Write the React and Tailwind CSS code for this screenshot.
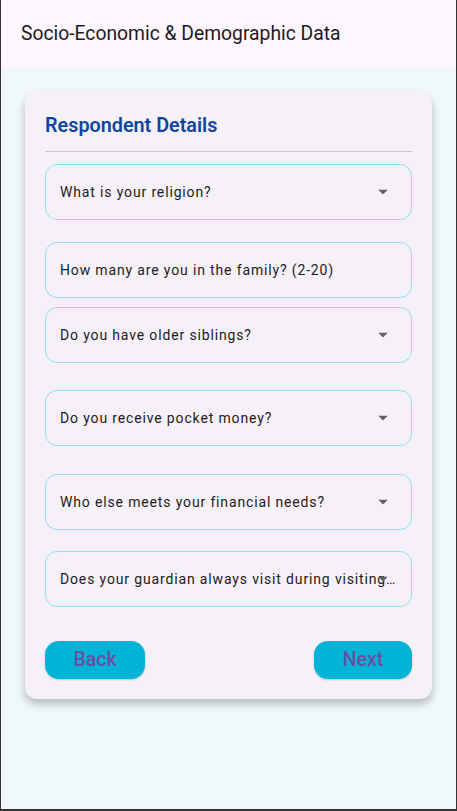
import { useState } from 'react'

const fields = [
  { label: 'What is your religion?', dropdown: true, mt: 'mt-[12px]' },
  { label: 'How many are you in the family? (2-20)', dropdown: false, mt: 'mt-[22px]' },
  { label: 'Do you have older siblings?', dropdown: true, mt: 'mt-[9px]' },
  { label: 'Do you receive pocket money?', dropdown: true, mt: 'mt-[27px]' },
  { label: 'Who else meets your financial needs?', dropdown: true, mt: 'mt-[28px]' },
  { label: 'Does your guardian always visit during visiting days?', dropdown: true, mt: 'mt-[21px]' },
]

function Arrow() {
  return (
    <svg width="10" height="5" viewBox="0 0 10 5" className="absolute right-[23px] top-1/2 -translate-y-1/2">
      <path d="M0 0 L10 0 L5 5 Z" fill="#616161" />
    </svg>
  )
}

function Field({ label, dropdown, mt }) {
  return (
    <div
      className={`${mt} relative h-[56px] rounded-[12px] border border-[#8fdff0] flex items-center pl-[14px] pr-[12px]`}
    >
      <span className="truncate text-[14px] tracking-[0.85px] text-[#1d1b20]">{label}</span>
      {dropdown && <Arrow />}
    </div>
  )
}

export default function App() {
  const [page] = useState(1)

  return (
    <div
      className="h-[811px] bg-[#f0f8fa] border-l border-r border-b-2 border-[#333333] flex flex-col"
      style={{ fontFamily: 'Roboto, "Liberation Sans", sans-serif' }}
    >
      <div className="h-[68px] bg-[#fef6fe] flex items-center pl-[20px]">
        <h1 className="text-[19.3px] text-[#1d1b20]">Socio-Economic &amp; Demographic Data</h1>
      </div>

      <div className="px-[24px] pt-[24px]">
        <div className="bg-[#f6f1f8] rounded-[12px] shadow-[0_5px_9px_rgba(0,0,0,0.25)] px-[20px] pt-[20px] pb-[20px]">
          <h2 className="text-[19.8px] leading-[28px] font-semibold text-[#0d47a1]">Respondent Details</h2>
          <div className="mt-[11px] h-px bg-[#c9c4cc]" />

          {fields.map(f => (
            <Field key={f.label} {...f} />
          ))}

          <div className="mt-[34px] flex justify-between" data-page={page}>
            <button className="h-[38px] w-[100px] rounded-[14px] bg-[#00b4d8] text-[19.5px] font-medium text-[#6b4fa3] shadow-[0_1px_2px_rgba(0,0,0,0.2)]">
              Back
            </button>
            <button className="h-[38px] w-[98px] rounded-[14px] bg-[#00b4d8] text-[19.5px] font-medium text-[#6b4fa3] shadow-[0_1px_2px_rgba(0,0,0,0.2)]">
              Next
            </button>
          </div>
        </div>
      </div>
    </div>
  )
}
